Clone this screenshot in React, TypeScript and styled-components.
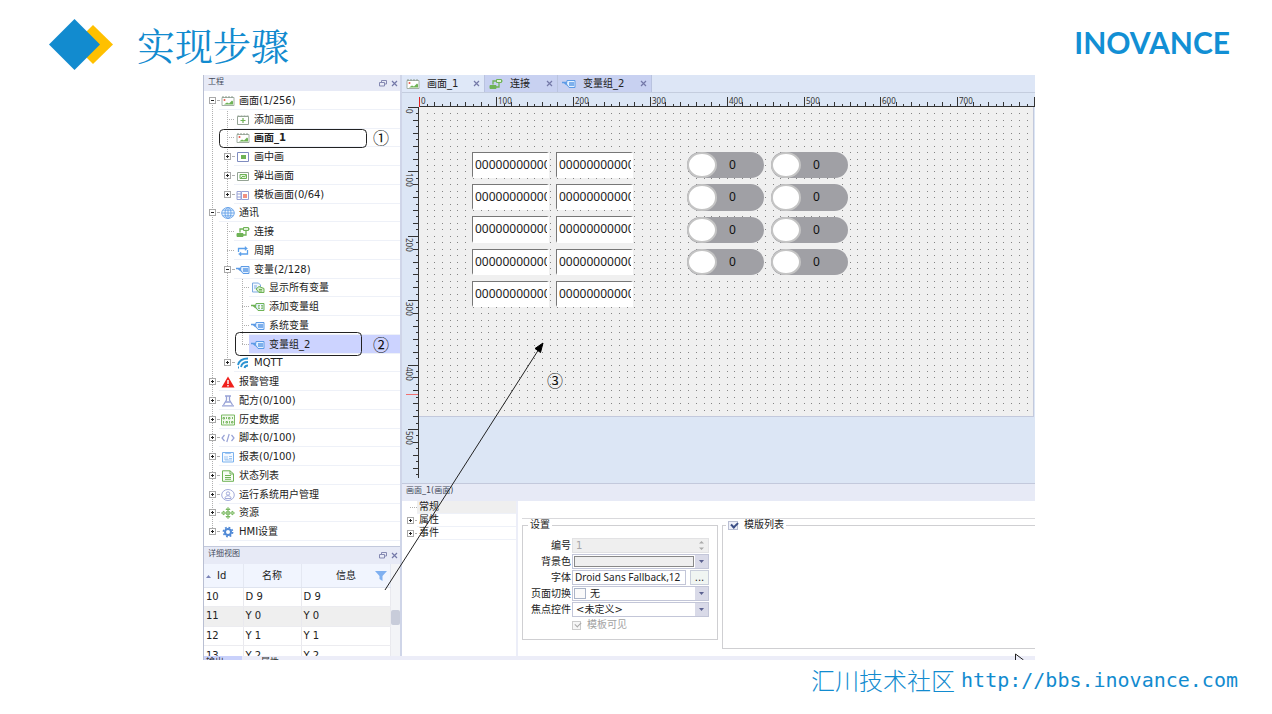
import React from "react";
import styled, { createGlobalStyle, css } from "styled-components";

const UI_FONT = '"DejaVu Sans", "Noto Sans CJK SC", sans-serif';

const GlobalStyle = createGlobalStyle`
  * { box-sizing: border-box; }
  body { margin: 0; background: #fff; font-family: ${UI_FONT}; color: #222; }
  button, input, select { font: inherit; color: inherit; margin: 0; padding: 0; border-radius: 0; }
`;

/* ---------- slide frame ---------- */

const Header = styled.header`
  display: flex;
  align-items: flex-start;
  height: 75px;
  padding: 0 42px 0 48px;
`;

const Title = styled.h1`
  flex: 1;
  margin: 16px 0 0 24px;
  font: 400 38px/56px "Noto Serif CJK SC", "Noto Sans CJK SC", serif;
  color: #128bcf;
`;

const DiamondMark = styled.svg`
  margin-top: 18px;
`;

const Brand = styled.div`
  margin-top: 24px;
  font: 700 30px/36px Lato, sans-serif;
  color: #128fd4;
`;

const Footer = styled.footer`
  display: flex;
  justify-content: flex-end;
  align-items: center;
  gap: 6px;
  padding: 4px 34px 0 0;
  font: 300 24px/32px "Noto Sans CJK SC", sans-serif;
  color: #128bcf;
`;

const SiteLink = styled.a`
  font: 20px/32px "DejaVu Sans Mono", monospace;
  color: inherit;
  text-decoration: none;
`;

/* ---------- application window ---------- */

const AppWindow = styled.main`
  position: relative;
  margin: 0 237px 0 203px;
  overflow: hidden;
`;

const Columns = styled.div`
  display: grid;
  grid-template-columns: 199px minmax(0, 1fr);
`;

const SidePane = styled.aside`
  display: flex;
  flex-direction: column;
  border-left: 1px solid #b9bfd3;
  border-right: 2px solid #cfd5e8;
`;

const PanelTitle = styled.div<{ $tall?: boolean }>`
  display: flex;
  align-items: center;
  gap: 4px;
  height: ${(p) => (p.$tall ? 18 : 16)}px;
  padding: 0 2px 0 4px;
  background: #e7eaf6;
  ${(p) => p.$tall && css`border-top: 1px solid #c3c9dc;`}
  font-size: 8px;
  line-height: 12px;
  color: #444b5c;
  span { flex: 1; padding-bottom: 3px; }
`;

const IconButton = styled.button`
  display: flex;
  border: 0;
  background: none;
`;

/* ---------- project tree ---------- */

const Tree = styled.ul`
  position: relative;
  isolation: isolate;
  display: grid;
  grid-template-rows: repeat(24, 1fr);
  height: 450px;
  margin: 0 0 5px;
  padding: 0;
  list-style: none;
  font-size: 10px;
  line-height: 14px;
`;

const TreeRow = styled.li<{ $depth: number }>`
  display: flex;
  padding-left: ${(p) => 4 + p.$depth * 15}px;
`;

const Branch = styled.span`
  display: flex;
  align-items: center;
  width: 11px;
`;

const Stub = styled.i<{ $leaf?: boolean }>`
  flex: 1;
  margin-left: ${(p) => (p.$leaf ? 4 : 0)}px;
  border-top: 1px dotted #b0b0b0;
`;

const RowBody = styled.span<{ $selected?: boolean; $strong?: boolean }>`
  flex: 1;
  display: flex;
  align-items: center;
  gap: 4px;
  padding: 2px 0 0 2px;
  border-bottom: 1px solid #eef1f8;
  white-space: nowrap;
  font-weight: ${(p) => (p.$strong ? 700 : 400)};
  background: ${(p) => (p.$selected ? "#ccd3ff" : "transparent")};
`;

const Trunks = styled.svg`
  position: absolute;
  z-index: -1;
  left: 0;
  top: 0;
  pointer-events: none;
`;

/* ---------- detail table ---------- */

const DetailView = styled.div`
  display: flex;
  height: 92px;
  overflow: hidden;
`;

const DetailTable = styled.table`
  flex: 1;
  height: 102px;
  border-collapse: collapse;
  table-layout: fixed;
  font-size: 10px;
  line-height: 14px;
  th {
    height: 23px;
    padding: 2px 0 0;
    background: #f1f5fe;
    font-weight: 400;
    border-right: 1px solid #e4e8f2;
    border-bottom: 1px solid #dfe4ef;
  }
  td {
    height: 19px;
    padding: 0 0 0 2px;
    border-right: 1px solid #e9e9ee;
    border-bottom: 1px solid #ececf0;
  }
`;

const DetailRow = styled.tr<{ $shade?: boolean }>`
  background: ${(p) => (p.$shade ? "#efefef" : "#fff")};
`;

const HeadCell = styled.span<{ $align?: string }>`
  display: flex;
  align-items: center;
  justify-content: ${(p) => p.$align || "center"};
  gap: 6px;
  padding: 0 2px;
`;

const ScrollTrack = styled.div`
  width: 9px;
  padding-top: 46px;
  background: #f3f4f7;
`;

const ScrollThumb = styled.div`
  height: 15px;
  border-radius: 2px;
  background: #c8ccda;
`;

/* ---------- editor ---------- */

const Editor = styled.section`
  display: flex;
  flex-direction: column;
  min-width: 0;
`;

const TabBar = styled.div`
  display: flex;
  height: 18px;
  background: #dde6f6;
  border-bottom: 1px solid #c4cdde;
`;

const Tab = styled.button<{ $active?: boolean; $width: number }>`
  display: flex;
  align-items: center;
  width: ${(p) => p.$width}px;
  padding: 0 4px;
  border: 0;
  border-right: 1px solid #b9c3df;
  background: ${(p) => (p.$active ? "#dfe8f8" : "#c8d1f1")};
  font-size: 10px;
  line-height: 14px;
  white-space: nowrap;
  span { flex: 1; text-align: left; padding-left: 7px; }
`;

const Workspace = styled.div`
  display: grid;
  grid-template-columns: 17px minmax(0, 1fr);
  grid-template-rows: 14px 376px;
  background: #dce6f5;
  overflow: hidden;
`;

const Ruler = styled.svg`
  display: block;
  font: 8px "Noto Sans", sans-serif;
  overflow: visible;
`;

const Canvas = styled.div`
  position: relative;
  width: 615px;
  height: 310px;
  background: #f0f0f0;
  border-right: 1px solid #c3c9dc;
  border-bottom: 1px solid #c3c9dc;
`;

const Dots = styled.svg`
  position: absolute;
  inset: 0;
  width: 100%;
  height: 100%;
`;

const WidgetGroup = styled.div<{ $x: number; $rows: number; $height: number }>`
  position: absolute;
  left: ${(p) => p.$x}px;
  top: 45px;
  display: grid;
  grid-template: repeat(${(p) => p.$rows}, 1fr) / 77px 77px;
  gap: 6px 7px;
  height: ${(p) => p.$height}px;
`;

const NumberField = styled.input`
  width: 77px;
  min-width: 0;
  height: 100%;
  padding-left: 2px;
  border: solid;
  border-width: 1px 2px 2px 1px;
  border-color: #777 #fff #fff #777;
  background: #fff;
  font: 12px/16px "Noto Sans", sans-serif;
`;

const Toggle = styled.button`
  display: flex;
  align-items: center;
  padding: 0;
  border: 0;
  border-radius: 14px;
  background: #a0a0a5;
  font: 12px/16px "Noto Sans", sans-serif;
  color: #111;
  i {
    width: 30px;
    height: 100%;
    border: 2px solid #c4c4c4;
    border-radius: 50%;
    background: #fff;
  }
  span { width: 31px; text-align: center; }
`;

/* ---------- property panel ---------- */

const Properties = styled.div`
  display: grid;
  grid-template-columns: 116px minmax(0, 1fr);
  height: 155px;
  background: #fff;
  font-size: 10px;
  line-height: 12px;
`;

const PropNav = styled.ul`
  margin: 0;
  padding: 0 0 0 4px;
  list-style: none;
  border-right: 2px solid #eceef8;
`;

const PropNavItem = styled.li<{ $active?: boolean }>`
  display: flex;
  height: 13px;
  span:last-child {
    flex: 1;
    padding-left: 2px;
    border-bottom: 1px solid #eef1f8;
    background: ${(p) => (p.$active ? "#efefef" : "#fff")};
  }
`;

const PropBody = styled.form`
  display: grid;
  grid-template-columns: 196px minmax(0, 1fr);
  column-gap: 4px;
  align-items: start;
  margin: 17px 0 0 4px;
  border-top: 1px solid #d9d9dc;
`;

const Group = styled.fieldset<{ $open?: boolean }>`
  min-width: 0;
  height: ${(p) => (p.$open ? 130 : 121)}px;
  margin: 0;
  padding: 7px 8px 0 0;
  border: 1px solid #cfcfd2;
  ${(p) => p.$open && css`border-right: 0;`}
  legend {
    display: flex;
    align-items: center;
    gap: 6px;
    margin-left: ${(p) => (p.$open ? 3 : 5)}px;
    padding: 0 2px;
  }
`;

const FormRow = styled.div`
  display: grid;
  grid-template-columns: 48px 137px;
  column-gap: 1px;
  height: 16px;
  label { line-height: 16px; text-align: right; }
`;

const Box = styled.div<{ $disabled?: boolean }>`
  position: relative;
  display: flex;
  min-width: 0;
  height: 15px;
  border: 1px solid ${(p) => (p.$disabled ? "#e2e2e4" : "#c3c6d8")};
  background: ${(p) => (p.$disabled ? "#efefef" : "#fff")};
  color: ${(p) => (p.$disabled ? "#a5a5a8" : "#222")};
`;

const PlainInput = styled.input`
  flex: 1;
  min-width: 0;
  padding: 0 0 0 3px;
  border: 0;
  background: none;
`;

const FontInput = styled(PlainInput)`
  padding-left: 2px;
  font: 10px/13px "Noto Sans", sans-serif;
`;

const Dropdown = styled.select<{ $indent?: boolean }>`
  flex: 1;
  min-width: 0;
  padding-left: ${(p) => (p.$indent ? 17 : 3)}px;
  border: 0;
  background: none;
  appearance: none;
`;

const Swatch = styled.span`
  position: absolute;
  left: 1px;
  top: 1px;
  width: 12px;
  height: 11px;
  border: 1px solid #aab4c8;
  background: #fafafa;
  pointer-events: none;
`;

const ColorButton = styled.button`
  flex: 1;
  margin: 1px;
  border: 1px solid #888;
  background: #efefef;
`;

const ArrowCap = styled.span`
  display: flex;
  align-items: center;
  justify-content: center;
  width: 13px;
  background: #d9dae8;
  pointer-events: none;
`;

const FontLine = styled.div`
  display: grid;
  grid-template-columns: minmax(0, 1fr) 19px;
  gap: 4px;
`;

const MoreButton = styled.button`
  height: 15px;
  border: 1px solid #c9cedb;
  background: #f0f5f2;
  line-height: 10px;
`;

const Check = styled.input<{ $size: number }>`
  appearance: none;
  position: relative;
  width: ${(p) => p.$size}px;
  height: 9px;
  border: 1px solid #b9bed2;
  background: #eef0f8;
  &::after {
    content: "";
    position: absolute;
    left: 2px;
    top: 0;
    width: 5px;
    height: 3px;
    border: solid #3c4f86;
    border-width: 0 0 2px 2px;
    transform: rotate(-45deg);
  }
  &:disabled { background: #f6f6f6; border-color: #ccc; }
  &:disabled::after { border-color: #a9a9a9; border-width: 0 0 1px 1px; }
`;

const VisibleRow = styled.div`
  display: flex;
  align-items: center;
  gap: 6px;
  height: 14px;
  padding-left: 49px;
  color: #a2a2a2;
`;

const BottomStrip = styled.div`
  display: flex;
  height: 4px;
  overflow: hidden;
  background: #ecedf8;
  font-size: 9px;
  line-height: 12px;
  color: #333;
  border-left: 1px solid #b9bfd3;
`;

const StripTab = styled.a<{ $active?: boolean }>`
  width: ${(p) => (p.$active ? 38 : 60)}px;
  height: 12px;
  padding-left: ${(p) => (p.$active ? 2 : 19)}px;
  color: inherit;
  text-decoration: none;
  background: ${(p) => (p.$active ? "#c9d1fb" : "transparent")};
`;

const Annotations = styled.svg`
  position: absolute;
  left: 0;
  top: 0;
  pointer-events: none;
  font: 16px "Noto Sans CJK SC", sans-serif;
`;

/* ---------- icons ---------- */

const G = "#6fb356";
const B = "#5c9be6";
const P = "#98a2d6";

const variableTag = (c: string) => (
  <>
    <path d="M0 4.500h5M2 4.500l3 2.500" stroke={c} strokeWidth="1.400" fill="none" />
    <path d="M5 2.500h8v7H7L4.500 6z" fill="#e3f0ff" stroke={c} />
    <path d="M7 4h5v4H7z" fill={c} opacity=".75" />
  </>
);

const glyphs: Record<string, React.ReactNode> = {
  screen: (
    <>
      <path d="M1 2.500h12v8H1z" fill="#fff" stroke="#a3b0a4" />
      <path d="M1 2h12" stroke="#8b9a8c" strokeDasharray="2 1" />
      <path d="M3 9.500l3-2 2 1 3-3 1 1v3z" fill={G} />
      <circle cx="3.500" cy="5" r="1" fill="#e8584a" />
    </>
  ),
  addScreen: (
    <>
      <path d="M1.500 2.500h11v8h-11z" fill="#fff" stroke="#94a395" />
      <path d="M1.500 2h11" stroke="#94a395" strokeDasharray="2 1" />
      <path d="M7 4v5M4.500 6.500h5" stroke={G} strokeWidth="1.200" />
    </>
  ),
  pip: (
    <>
      <path d="M1.500 1.500h11v9h-11z" fill="#fff" stroke="#7f8cc0" />
      <path d="M5 4h5v4H5z" fill={G} />
    </>
  ),
  popup: (
    <>
      <path d="M1.500 2.500h11v8h-11z" fill="#fff" stroke="#94a395" />
      <path d="M4 4.500h6.500v4H4z" fill="#e4f4dd" stroke={G} />
      <path d="M5 8l2-2 1 1 2-1.500" stroke={G} fill="none" />
    </>
  ),
  template: (
    <>
      <path d="M1 2.500h4v8H1zM1 5h4M1 8h4M5.500 2.500h7v8h-7z" fill="#fff" stroke={P} />
      <path d="M7 5h4v4H7z" fill="#f29282" />
    </>
  ),
  globe: (
    <g fill="#eaf5ff" stroke={B} strokeWidth=".8">
      <ellipse cx="7" cy="6" rx="6.300" ry="5.500" />
      <ellipse cx="7" cy="6" rx="3" ry="5.500" />
      <path d="M.7 6h12.600M7 .5v11M1.800 3.200h10.400M1.800 8.800h10.400" />
    </g>
  ),
  link: (
    <g fill="none" stroke={G}>
      <path d="M7.500 1.500h5v3h-5z" fill="#dff1d8" />
      <path d="M1 7.500h6v3H1z" fill={G} />
      <path d="M7 3H4v3.500M12 3h1.500M7 9h3V5" strokeWidth="1.300" />
    </g>
  ),
  cycle: (
    <g fill="none" stroke="#5ba0ea" strokeWidth="1.300">
      <path d="M2.500 7V3.500H10M11.500 5v4H4" />
      <path d="M9 1.500l2.500 2L9 5.500zM5 7L2.500 9 5 11z" fill="#5ba0ea" strokeWidth=".4" />
    </g>
  ),
  variable: variableTag(B),
  addVariable: (
    <>
      {variableTag(G)}
      <path d="M9.500 4v4M7.500 6h4" stroke="#fff" />
    </>
  ),
  allVariables: (
    <g fill="none">
      <path d="M1.500 1h6l2 2v7h-8z" fill="#f2f8ff" stroke="#7daae0" />
      <path d="M3 4h3M3 6h3" stroke="#7daae0" />
      <path d="M5 7l3-2.500 5 2v4H8z" fill="#d5ecc9" stroke={G} />
      <path d="M8 7.500h3M8 9h3" stroke={G} />
    </g>
  ),
  mqtt: (
    <g fill="none" stroke="#2c93d2" strokeWidth="1.800">
      <path d="M2 8c1-4 5-6.500 10-6.500M5 10c.5-3 3-5 7-5M8.500 11c.3-1.500 1.500-2.500 3.500-2.500" />
      <path d="M2 10.500h1" strokeWidth="2" />
    </g>
  ),
  alarm: (
    <>
      <path d="M7 .5l6.500 11H.5z" fill="#f0201c" />
      <path d="M7 4v4M7 9v1.500" stroke="#fff" strokeWidth="1.400" />
    </>
  ),
  recipe: (
    <g fill="none" stroke={P} strokeWidth="1.300">
      <path d="M4 1h6M5.500 1v4L2.500 10M8.500 1v4l3 5" />
      <path d="M1 10.800h12M4.500 7h5" />
    </g>
  ),
  history: (
    <g fill="none" stroke={G} strokeWidth=".9">
      <path d="M.5 1h13v10H.5z" fill="#f2f9ee" />
      <path d="M2 3.500h1.500v1.500H2zM5.500 3v2M7.500 3.500H9v1.500H7.500zM11.500 3v2M2.500 7v2.500M5 7.500h1.500V9H5zM8.500 7v2.500M10.500 7.500H12V9h-1.500z" />
    </g>
  ),
  script: (
    <g fill="none" stroke={P} strokeWidth="1.200">
      <path d="M3.500 3L1 6l2.500 3M10.500 3L13 6l-2.500 3M8.200 2L5.800 10" />
    </g>
  ),
  report: (
    <g fill="none" stroke="#7bb2ee">
      <path d="M1.500 1.500h11v9.500h-11z" fill="#f4f9ff" />
      <path d="M4.500 1v1.500h5V1M4 5v4M6 5v4M8 5.500h3M8 7.500h3M4 9h7" strokeWidth=".7" />
    </g>
  ),
  status: (
    <g fill="none" stroke={G}>
      <path d="M1.500 .8H9l3.500 3v7.500h-11z" fill="#f7fcf4" />
      <path d="M9 .8V4h3.500M4 5.500h6M4 7.500h6M4 9.300h6" />
    </g>
  ),
  user: (
    <g fill="none" stroke={P} strokeWidth=".9">
      <ellipse cx="7" cy="6" rx="6.300" ry="5.500" />
      <circle cx="7" cy="4.500" r="1.700" />
      <path d="M4 9.500V9c0-3 6-3 6 0v.5z" />
    </g>
  ),
  resource: (
    <g fill="none" stroke={G} strokeWidth=".9">
      <path d="M7 .5l2 2H5zM7 11.500l2-2H5zM.5 6l2.500-2v4zM13.500 6L11 4v4z" fill="#cfe8c4" />
      <circle cx="7" cy="6" r="2" />
      <path d="M7 2.500v7M3 6h8" />
    </g>
  ),
  gear: (
    <g fill="none" stroke="#5089d6">
      <circle cx="7" cy="6" r="3" strokeWidth="2" />
      <circle cx="7" cy="6" r="4.600" strokeWidth="1.600" strokeDasharray="1.800 1.800" />
    </g>
  ),
};

const Icon = ({ name }: { name: string }) => (
  <svg width="14" height="12" viewBox="0 0 14 12" aria-hidden="true">{glyphs[name]}</svg>
);

const Expander = ({ open }: { open?: boolean }) => (
  <svg width="9" height="9" viewBox="0 0 9 9" aria-hidden="true" shapeRendering="crispEdges">
    <path d="M1.500 1.500h6v6h-6z" fill="#fff" stroke="#a9a9a9" />
    <path d={open ? "M3 4.500h3" : "M3 4.500h3M4.500 3v3"} stroke="#222" />
  </svg>
);

const CloseGlyph = () => (
  <svg width="7" height="7" viewBox="0 0 7 7" aria-hidden="true">
    <path d="M1 1l5 5M6 1L1 6" stroke="#7479a8" strokeWidth="1.200" />
  </svg>
);

const FloatGlyph = () => (
  <svg width="8" height="7" viewBox="0 0 8 7" aria-hidden="true">
    <path d="M2.500 2V.5h5v3.500H6M.5 2.500h5v3.500h-5z" fill="none" stroke="#8589b2" />
  </svg>
);

const Caret = () => (
  <svg width="5" height="3" viewBox="0 0 5 3" aria-hidden="true">
    <path d="M0 0h5L2.500 3z" fill="#5b6190" />
  </svg>
);

/* ---------- data ---------- */

type Node = { d: number; icon: string; text: string; box?: "open" | "closed"; strong?: boolean; selected?: boolean };

const nodes: Node[] = [
  { d: 0, icon: "screen", text: "画面(1/256)", box: "open" },
  { d: 1, icon: "addScreen", text: "添加画面" },
  { d: 1, icon: "screen", text: "画面_1", strong: true },
  { d: 1, icon: "pip", text: "画中画", box: "closed" },
  { d: 1, icon: "popup", text: "弹出画面", box: "closed" },
  { d: 1, icon: "template", text: "模板画面(0/64)", box: "closed" },
  { d: 0, icon: "globe", text: "通讯", box: "open" },
  { d: 1, icon: "link", text: "连接" },
  { d: 1, icon: "cycle", text: "周期" },
  { d: 1, icon: "variable", text: "变量(2/128)", box: "open" },
  { d: 2, icon: "allVariables", text: "显示所有变量" },
  { d: 2, icon: "addVariable", text: "添加变量组" },
  { d: 2, icon: "variable", text: "系统变量" },
  { d: 2, icon: "variable", text: "变量组_2", selected: true },
  { d: 1, icon: "mqtt", text: "MQTT", box: "closed" },
  { d: 0, icon: "alarm", text: "报警管理", box: "closed" },
  { d: 0, icon: "recipe", text: "配方(0/100)", box: "closed" },
  { d: 0, icon: "history", text: "历史数据", box: "closed" },
  { d: 0, icon: "script", text: "脚本(0/100)", box: "closed" },
  { d: 0, icon: "report", text: "报表(0/100)", box: "closed" },
  { d: 0, icon: "status", text: "状态列表", box: "closed" },
  { d: 0, icon: "user", text: "运行系统用户管理", box: "closed" },
  { d: 0, icon: "resource", text: "资源", box: "closed" },
  { d: 0, icon: "gear", text: "HMI设置", box: "closed" },
];

const variables = [["10", "D 9"], ["11", "Y 0"], ["12", "Y 1"], ["13", "Y 2"]];

const tabs = [
  { icon: "screen", text: "画面_1", width: 83, active: true },
  { icon: "link", text: "连接", width: 73 },
  { icon: "variable", text: "变量组_2", width: 94 },
];

const SCALE_X = 76.9;
const SCALE_Y = 64.4;
const range = (n: number) => Array.from({ length: n }, (_, i) => i);

/* ---------- parts ---------- */

const TitleActions = () => (
  <>
    <IconButton aria-label="浮动"><FloatGlyph /></IconButton>
    <IconButton aria-label="关闭"><CloseGlyph /></IconButton>
  </>
);

const ProjectTree = () => (
  <Tree>
    <Trunks width="60" height="450" fill="none" stroke="#b0b0b0" strokeDasharray="1 1">
      <path d="M8.500 14v426M23.500 20v83M23.500 132v140M38.500 188v66" />
    </Trunks>
    {nodes.map((n) => (
      <TreeRow key={n.text} $depth={n.d}>
        <Branch>
          {n.box && <Expander open={n.box === "open"} />}
          <Stub $leaf={!n.box} />
        </Branch>
        <RowBody $selected={n.selected} $strong={n.strong}>
          <Icon name={n.icon} />
          {n.text}
        </RowBody>
      </TreeRow>
    ))}
  </Tree>
);

const HorizontalRuler = () => (
  <Ruler width="617" height="14">
    <path d="M0 13.500h616" stroke="#333" />
    {range(81).map((i) => {
      const x = Math.round((i * SCALE_X) / 10) + 0.5;
      return <path key={i} d={`M${x} ${i % 10 === 0 ? 4 : i % 2 ? 11 : 9}V14`} stroke={i ? "#333" : "#e02020"} />;
    })}
    {range(8).map((i) => (
      <text key={i} x={Math.round(i * SCALE_X) + 2} y="11" fill="#333">{i * 100}</text>
    ))}
  </Ruler>
);

const VerticalRuler = () => (
  <Ruler width="17" height="372">
    <path d="M16.500 0v371" stroke="#333" />
    {range(58).map((i) => {
      const y = Math.round((i * SCALE_Y) / 10) + 0.5;
      return <path key={i} d={`M${i % 10 === 0 ? 6 : i % 2 ? 14 : 11} ${y}H17`} stroke="#333" />;
    })}
    {range(6).map((i) => (
      <text key={i} transform={`translate(4 ${Math.round(i * SCALE_Y) + 2}) rotate(90)`} fill="#333">{i * 100}</text>
    ))}
    <path d="M4 287.500h12" stroke="#f07070" />
  </Ruler>
);

const DOT_COLUMNS = range(79).map((c) => Math.round(((c + 1) * SCALE_X) / 10));

const DesignCanvas = () => (
  <Canvas>
    <Dots aria-hidden="true" stroke="#848484">
      {range(47).map((r) => {
        const y = Math.round(((r + 1) * SCALE_Y) / 10) + 0.5;
        return <path key={r} d={DOT_COLUMNS.map((x) => `M${x} ${y}h1`).join("")} />;
      })}
    </Dots>
    <WidgetGroup $x={53} $rows={5} $height={155}>
      {range(10).map((i) => (
        <NumberField key={i} aria-label={`D ${i}`} defaultValue="00000000000000" />
      ))}
    </WidgetGroup>
    <WidgetGroup $x={268} $rows={4} $height={123}>
      {range(8).map((i) => (
        <Toggle key={i} role="switch" aria-checked="false"><i /><span>0</span></Toggle>
      ))}
    </WidgetGroup>
  </Canvas>
);

const PropertyPanel = () => (
  <Properties>
    <PropNav>
      {["常规", "属性", "事件"].map((t, i) => (
        <PropNavItem key={t} $active={i === 0}>
          <Branch>{i > 0 && <Expander />}<Stub $leaf={i === 0} /></Branch>
          <span>{t}</span>
        </PropNavItem>
      ))}
    </PropNav>
    <PropBody>
      <Group>
        <legend>设置</legend>
        <FormRow>
          <label htmlFor="number">编号</label>
          <Box $disabled>
            <PlainInput id="number" defaultValue="1" disabled />
            <svg width="13" height="13" viewBox="0 0 13 13" aria-hidden="true">
              <path d="M4 4.500L6.500 2 9 4.500zM4 8.500L6.500 11 9 8.500z" fill="#aaa" />
            </svg>
          </Box>
        </FormRow>
        <FormRow>
          <label htmlFor="background">背景色</label>
          <Box>
            <ColorButton id="background" type="button" />
            <ArrowCap><Caret /></ArrowCap>
          </Box>
        </FormRow>
        <FormRow>
          <label htmlFor="font">字体</label>
          <FontLine>
            <Box><FontInput id="font" defaultValue="Droid Sans Fallback,12" /></Box>
            <MoreButton type="button">...</MoreButton>
          </FontLine>
        </FormRow>
        <FormRow>
          <label htmlFor="transition">页面切换</label>
          <Box>
            <Swatch />
            <Dropdown id="transition" $indent><option>无</option></Dropdown>
            <ArrowCap><Caret /></ArrowCap>
          </Box>
        </FormRow>
        <FormRow>
          <label htmlFor="focus">焦点控件</label>
          <Box>
            <Dropdown id="focus"><option>&lt;未定义&gt;</option></Dropdown>
            <ArrowCap><Caret /></ArrowCap>
          </Box>
        </FormRow>
        <VisibleRow>
          <Check id="visible" type="checkbox" $size={9} defaultChecked disabled />
          <label htmlFor="visible">模板可见</label>
        </VisibleRow>
      </Group>
      <Group $open>
        <legend>
          <Check id="templates" type="checkbox" $size={10} defaultChecked />
          <label htmlFor="templates">模版列表</label>
        </legend>
      </Group>
    </PropBody>
  </Properties>
);

export default function App() {
  return (
    <>
      <GlobalStyle />
      <Header>
        <DiamondMark width="65" height="52" viewBox="0 0 65 52" aria-hidden="true">
          <path d="M45 7l20 19.500L45 46 25.500 26.500z" fill="#ffc000" />
          <path d="M26.500 1L52 26.500 26.500 52 1 26.500z" fill="#128bcf" />
        </DiamondMark>
        <Title>实现步骤</Title>
        <Brand>INOVANCE</Brand>
      </Header>
      <AppWindow>
        <Columns>
          <SidePane>
            <PanelTitle><span>工程</span><TitleActions /></PanelTitle>
            <ProjectTree />
            <PanelTitle $tall><span>详细视图</span><TitleActions /></PanelTitle>
            <DetailView>
              <DetailTable>
                <colgroup><col width="39" /><col width="58" /><col /></colgroup>
                <thead>
                  <tr>
                    <th>
                      <HeadCell $align="flex-start">
                        <svg width="5" height="3" aria-hidden="true"><path d="M0 3h5L2.500 0z" fill="#7b84b8" /></svg>
                        Id
                      </HeadCell>
                    </th>
                    <th><HeadCell>名称</HeadCell></th>
                    <th>
                      <HeadCell $align="flex-end">
                        信息
                        <svg width="26" height="12" viewBox="0 0 26 12" aria-hidden="true">
                          <path d="M13 1h12l-4.500 5v5l-3-2V6z" fill="#7fb0f0" />
                        </svg>
                      </HeadCell>
                    </th>
                  </tr>
                </thead>
                <tbody>
                  {variables.map(([id, name], i) => (
                    <DetailRow key={id} $shade={i === 1}>
                      <td>{id}</td><td>{name}</td><td>{name}</td>
                    </DetailRow>
                  ))}
                </tbody>
              </DetailTable>
              <ScrollTrack><ScrollThumb /></ScrollTrack>
            </DetailView>
          </SidePane>
          <Editor>
            <TabBar>
              {tabs.map((t) => (
                <Tab key={t.text} $active={t.active} $width={t.width}>
                  <Icon name={t.icon} />
                  <span>{t.text}</span>
                  <CloseGlyph />
                </Tab>
              ))}
            </TabBar>
            <Workspace>
              <div />
              <HorizontalRuler />
              <VerticalRuler />
              <DesignCanvas />
            </Workspace>
            <PanelTitle $tall><span>画面_1(画面)</span></PanelTitle>
            <PropertyPanel />
          </Editor>
        </Columns>
        <BottomStrip>
          <StripTab href="#output" $active>输出</StripTab>
          <StripTab href="#attributes">属性</StripTab>
        </BottomStrip>
        <Annotations width="832" height="585" fill="none" stroke="#222">
          <rect x="16.500" y="54.500" width="147" height="18" rx="4" />
          <rect x="32.500" y="257.500" width="126" height="23" rx="4" />
          <path d="M182 515L336 274" />
          <path d="M340 268l-2.500 9.500-5.500-4z" fill="#000" stroke="#000" />
          <path d="M812.500 585v-6l8 6" />
          <g fill="#111" stroke="none">
            <text x="170" y="69">①</text>
            <text x="170" y="276">②</text>
            <text x="344" y="312">③</text>
          </g>
        </Annotations>
      </AppWindow>
      <Footer>
        <span>汇川技术社区</span>
        <SiteLink href="http://bbs.inovance.com">http://bbs.inovance.com</SiteLink>
      </Footer>
    </>
  );
}
